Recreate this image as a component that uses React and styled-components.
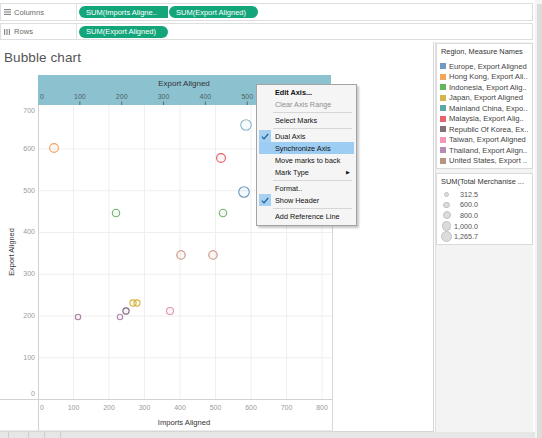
import React from 'react';
import styled, { createGlobalStyle } from 'styled-components';

const GlobalStyle = createGlobalStyle`
  html, body {
    margin: 0;
    padding: 0;
    background: #fff;
  }
  body {
    font-family: "Liberation Sans", Arial, sans-serif;
    overflow: hidden;
  }
`;

const Page = styled.div`
  position: relative;
  width: 542px;
  height: 438px;
  display: flex;
  overflow: hidden;
`;

const Main = styled.div`
  width: 535px;
  display: flex;
  flex-direction: column;
`;

const Scrollbar = styled.div`
  width: 7px;
  padding-top: 4px;
  background: #f4f4f4;
  display: flex;

  &::after {
    content: '';
    flex: 1;
    margin-left: 2px;
    background: #dcdcdc;
  }
`;

const Shelves = styled.div`
  width: 533px;
  padding-top: 3px;
  display: flex;
  flex-direction: column;
  gap: 2px;
  margin-bottom: 2px;
`;

const Shelf = styled.div`
  height: ${p => p.$h}px;
  box-sizing: border-box;
  border: 1px solid #dedede;
  display: flex;
  align-items: center;
`;

const ShelfLabel = styled.div`
  width: 76px;
  height: 100%;
  box-sizing: border-box;
  border-right: 1px solid #e2e2e2;
  display: flex;
  align-items: center;
  gap: 3px;
  padding-left: 3px;
  font-size: 7.6px;
  color: #6a6a6a;
`;

const PillRow = styled.div`
  display: flex;
  gap: 1px;
  padding-left: 2px;
`;

const Pill = styled.span`
  display: inline-flex;
  align-items: center;
  width: 89px;
  height: 12px;
  box-sizing: border-box;
  padding-left: 7px;
  background: #13a67a;
  color: #fff;
  font-size: 7.5px;
  border-radius: ${p => (p.$joined ? '6px 0 0 6px' : '6px')};
  white-space: nowrap;
  overflow: hidden;
`;

const Workspace = styled.div`
  height: 390px;
  display: flex;
`;

const Sheet = styled.section`
  width: 434px;
  height: 390px;
  box-sizing: border-box;
  border-right: 1px solid #d6d6d6;
  border-bottom: 1px solid #d6d6d6;
  display: flex;
  flex-direction: column;
`;

const Title = styled.h1`
  margin: 0;
  padding: 7px 0 0 4px;
  height: 22px;
  line-height: 18px;
  font-size: 13.5px;
  font-weight: normal;
  color: #555;
  letter-spacing: 0.1px;
`;

const ChartGrid = styled.div`
  margin-top: 7px;
  display: grid;
  grid-template-columns: 38px 295px;
  grid-template-rows: 30px 294px 32px;
`;

const TopHeader = styled.div`
  grid-column: 2;
  width: 293px;
  background: #8cc2d0;
`;

const Corner = styled.div`
  border-top: 1px solid #d2d2d2;
  border-bottom: 1px solid #ececec;
`;

const XAxisCell = styled.div`
  box-sizing: border-box;
  border-top: 1px solid #d2d2d2;
  border-left: 1px solid #d2d2d2;
  border-right: 1px solid #d8d8d8;
  border-bottom: 1px solid #ececec;
  overflow: hidden;
`;

const Legends = styled.aside`
  width: 98px;
  margin-left: 1px;
  box-sizing: border-box;
  background: #f3f3f3;
  border-left: 1px solid #e0e0e0;
  display: flex;
  flex-direction: column;
  gap: 4px;
  padding-top: 1px;
`;

const LegendCard = styled.div`
  background: #fff;
  border: 1px solid #dadada;
  padding: 3px 2px 2px 3px;
`;

const LegendTitle = styled.div`
  font-size: 7.4px;
  line-height: 10px;
  color: #333;
  padding-left: 1px;
  margin-bottom: ${p => p.$gap}px;
  white-space: nowrap;
  overflow: hidden;
`;

const LegendItem = styled.div`
  display: flex;
  align-items: center;
  gap: 3px;
  height: 10.5px;
  font-size: 7.6px;
  color: #444;
  white-space: nowrap;
`;

const Swatch = styled.span`
  width: 6px;
  height: 6px;
  flex: none;
  background: ${p => p.$c};
`;

const SizeItem = styled.div`
  display: flex;
  align-items: center;
  height: 10.6px;
  font-size: 7.2px;
  color: #555;
`;

const SizeSlot = styled.span`
  width: 13px;
  display: flex;
  justify-content: center;
`;

const SizeDot = styled.span`
  width: ${p => p.$d}px;
  height: ${p => p.$d}px;
  box-sizing: border-box;
  border-radius: 50%;
  background: #dcdcdc;
  border: 1px solid #c2c2c2;
`;

const SizeValue = styled.span`
  width: 25px;
  text-align: right;
  white-space: nowrap;
`;

const BottomBar = styled.div`
  flex: 1;
  background: #e6e6e6;
  display: flex;
`;

const Tab = styled.span`
  width: ${p => p.$w}px;
  border-right: 1px solid #cfcfcf;
`;

const Menu = styled.div`
  position: absolute;
  left: 256px;
  top: 84px;
  width: 101px;
  box-sizing: border-box;
  padding: 1px 2px 3px;
  background: #f5f5f5;
  border: 1px solid #a3a3a3;
  box-shadow: 2px 2px 2px rgba(0, 0, 0, 0.22);
`;

const MenuItem = styled.div`
  display: flex;
  align-items: center;
  height: 12px;
  font-size: 7.3px;
  font-weight: ${p => (p.$bold ? 'bold' : 'normal')};
  color: ${p => (p.$disabled ? '#8f8f8f' : '#111')};
  background: ${p => (p.$active ? '#9dcdf3' : 'transparent')};
  white-space: nowrap;
`;

const CheckSlot = styled.span`
  width: 12px;
  height: 12px;
  margin-right: 4px;
  display: flex;
  align-items: center;
  justify-content: center;
  background: ${p => (p.$on ? '#a6d1f2' : 'transparent')};
`;

const SubArrow = styled.span`
  margin-left: auto;
  margin-right: 4px;
  font-size: 5px;
`;

const MenuSep = styled.div`
  height: 1px;
  margin: 1.5px 2px 1.5px 14px;
  background: #d6d6d6;
`;

const ColumnsIcon = () => (
  <svg width="7" height="6" viewBox="0 0 7 6">
    <rect x="0" y="0" width="7" height="1.2" fill="#8a8a8a" />
    <rect x="0" y="2.4" width="7" height="1.2" fill="#8a8a8a" />
    <rect x="0" y="4.8" width="7" height="1.2" fill="#8a8a8a" />
  </svg>
);

const RowsIcon = () => (
  <svg width="7" height="6" viewBox="0 0 7 6">
    <rect x="0" y="0" width="1.2" height="6" fill="#8a8a8a" />
    <rect x="2.4" y="0" width="1.2" height="6" fill="#8a8a8a" />
    <rect x="4.8" y="0" width="1.2" height="6" fill="#8a8a8a" />
  </svg>
);

const Check = () => (
  <svg width="8" height="7" viewBox="0 0 8 7">
    <path d="M0.8 3.6 L3 5.8 L7.2 1" fill="none" stroke="#1d5f99" strokeWidth="1.2" />
  </svg>
);

const xb = v => 38 + v * 0.355;
const yv = v => 395.5 - v * 0.4175;
const xt = v => 38 + v * 0.4185;

const bubbles = [
  { x: 246, y: 121, r: 5.3, c: '#8fb9c9' },
  { x: 54, y: 144, r: 4.4, c: '#f0a462' },
  { x: 221, y: 154, r: 4.4, c: '#e25f66' },
  { x: 244, y: 188, r: 5.3, c: '#6f96bd' },
  { x: 116, y: 209, r: 3.7, c: '#73b16b' },
  { x: 223, y: 209, r: 3.7, c: '#73b16b' },
  { x: 181, y: 251, r: 4.2, c: '#c88a77' },
  { x: 213, y: 251, r: 4.2, c: '#c88a77' },
  { x: 78, y: 313, r: 2.7, c: '#ad82a7' },
  { x: 120, y: 313, r: 2.7, c: '#b68bb2' },
  { x: 126, y: 307, r: 3.1, c: '#7c6579' },
  { x: 133, y: 299, r: 3.1, c: '#d5b23f' },
  { x: 137, y: 299, r: 3.1, c: '#d5b23f' },
  { x: 170, y: 307, r: 3.5, c: '#e392b4' },
];

const yTicks = [
  { v: 700, y: 107 },
  { v: 600, y: 145 },
  { v: 500, y: 187 },
  { v: 400, y: 228 },
  { v: 300, y: 270 },
  { v: 200, y: 312 },
  { v: 100, y: 354 },
  { v: 0, y: 390 },
];

const regions = [
  ['#6f9ac4', 'Europe, Export Aligned'],
  ['#f4a65a', 'Hong Kong, Export Ali..'],
  ['#62b85f', 'Indonesia, Export Alig..'],
  ['#d7b54e', 'Japan, Export Aligned'],
  ['#5fa6a4', 'Mainland China, Expo..'],
  ['#e8646c', 'Malaysia, Export Alig..'],
  ['#837079', 'Republic Of Korea, Ex..'],
  ['#f297b6', 'Taiwan, Export Aligned'],
  ['#b58db3', 'Thailand, Export Align..'],
  ['#b6947f', 'United States, Export ..'],
];

const sizes = [
  [5, '312.5'],
  [6.5, '600.0'],
  [8, '800.0'],
  [9.5, '1,000.0'],
  [11, '1,265.7'],
];

function TopAxis() {
  const ticks = [100, 200, 300, 400, 500, 600, 700];
  return (
    <svg width="293" height="30" viewBox="38 71 293 30" style={{ display: 'block' }}>
      <text x="184" y="80" fontSize="8" fill="#333" textAnchor="middle" dominantBaseline="middle">
        Export Aligned
      </text>
      <text x="40" y="93" fontSize="7" fill="#4f5f63" dominantBaseline="middle">0</text>
      {ticks.map(v => (
        <g key={v}>
          {v < 600 && (
            <text x={xt(v)} y="93" fontSize="7" fill="#4f5f63" textAnchor="middle" dominantBaseline="middle">
              {v}
            </text>
          )}
          <line x1={xt(v)} x2={xt(v)} y1="97.5" y2="101" stroke="#4a5558" strokeWidth="0.8" />
        </g>
      ))}
    </svg>
  );
}

function YAxis() {
  return (
    <svg width="38" height="294" viewBox="0 101 38 294" style={{ display: 'block' }}>
      <text
        x="12"
        y="248"
        fontSize="7.4"
        fill="#333"
        textAnchor="middle"
        dominantBaseline="middle"
        transform="rotate(-90 12 248)"
      >
        Export Aligned
      </text>
      {yTicks.map(t => (
        <text key={t.v} x="35" y={t.y} fontSize="7" fill="#9a9a9a" textAnchor="end" dominantBaseline="middle">
          {t.v}
        </text>
      ))}
    </svg>
  );
}

function Plot() {
  const vx = [100, 200, 300, 400, 500, 600, 700, 800];
  const hy = [100, 200, 300, 400, 500, 600];
  return (
    <svg width="295" height="294" viewBox="38 101 295 294" style={{ display: 'block' }}>
      {vx.map(v => (
        <line key={v} x1={xb(v)} x2={xb(v)} y1="101" y2="395" stroke="#efefef" strokeWidth="1" />
      ))}
      {hy.map(v => (
        <line key={v} x1="38" x2="332" y1={yv(v)} y2={yv(v)} stroke="#efefef" strokeWidth="1" />
      ))}
      <line x1="38.5" x2="38.5" y1="101" y2="395" stroke="#d2d2d2" />
      <line x1="332.5" x2="332.5" y1="101" y2="395" stroke="#d8d8d8" />
      {bubbles.map((b, i) => (
        <circle
          key={i}
          cx={b.x}
          cy={b.y}
          r={b.r}
          fill={b.c}
          fillOpacity="0.07"
          stroke={b.c}
          strokeWidth="1.1"
        />
      ))}
    </svg>
  );
}

function XAxis() {
  const ticks = [100, 200, 300, 400, 500, 600, 700, 800];
  return (
    <svg width="293" height="31" viewBox="39 396 293 31" style={{ display: 'block' }}>
      <text x="40" y="404" fontSize="7" fill="#9a9a9a" dominantBaseline="middle">0</text>
      {ticks.map(v => (
        <text key={v} x={xb(v)} y="404" fontSize="7" fill="#9a9a9a" textAnchor="middle" dominantBaseline="middle">
          {v}
        </text>
      ))}
      <text x="184" y="419" fontSize="7.6" fill="#333" textAnchor="middle" dominantBaseline="middle">
        Imports Aligned
      </text>
    </svg>
  );
}

export default function App() {
  return (
    <>
      <GlobalStyle />
      <Page>
        <Main>
          <Shelves>
            <Shelf $h={18}>
              <ShelfLabel>
                <ColumnsIcon />
                Columns
              </ShelfLabel>
              <PillRow>
                <Pill $joined>SUM(Imports Aligne..</Pill>
                <Pill>SUM(Export Aligned)</Pill>
              </PillRow>
            </Shelf>
            <Shelf $h={17}>
              <ShelfLabel>
                <RowsIcon />
                Rows
              </ShelfLabel>
              <PillRow>
                <Pill>SUM(Export Aligned)</Pill>
              </PillRow>
            </Shelf>
          </Shelves>

          <Workspace>
            <Sheet>
              <Title>Bubble chart</Title>
              <ChartGrid>
                <TopHeader>
                  <TopAxis />
                </TopHeader>
                <YAxis />
                <Plot />
                <Corner />
                <XAxisCell>
                  <XAxis />
                </XAxisCell>
              </ChartGrid>
            </Sheet>

            <Legends>
              <LegendCard>
                <LegendTitle $gap={4}>Region, Measure Names</LegendTitle>
                {regions.map(([c, label]) => (
                  <LegendItem key={label}>
                    <Swatch $c={c} />
                    {label}
                  </LegendItem>
                ))}
              </LegendCard>
              <LegendCard>
                <LegendTitle $gap={2}>SUM(Total Merchanise ...</LegendTitle>
                {sizes.map(([d, v]) => (
                  <SizeItem key={v}>
                    <SizeSlot>
                      <SizeDot $d={d} />
                    </SizeSlot>
                    <SizeValue>{v}</SizeValue>
                  </SizeItem>
                ))}
              </LegendCard>
            </Legends>
          </Workspace>

          <BottomBar>
            <Tab $w={8} />
            <Tab $w={19} />
            <Tab $w={15} />
            <Tab $w={15} />
          </BottomBar>
        </Main>
        <Scrollbar />

        <Menu>
          <MenuItem $bold>
            <CheckSlot />
            Edit Axis...
          </MenuItem>
          <MenuItem $disabled>
            <CheckSlot />
            Clear Axis Range
          </MenuItem>
          <MenuSep />
          <MenuItem>
            <CheckSlot />
            Select Marks
          </MenuItem>
          <MenuSep />
          <MenuItem>
            <CheckSlot $on>
              <Check />
            </CheckSlot>
            Dual Axis
          </MenuItem>
          <MenuItem $active>
            <CheckSlot />
            Synchronize Axis
          </MenuItem>
          <MenuItem>
            <CheckSlot />
            Move marks to back
          </MenuItem>
          <MenuItem>
            <CheckSlot />
            Mark Type
            <SubArrow>▶</SubArrow>
          </MenuItem>
          <MenuSep />
          <MenuItem>
            <CheckSlot />
            Format..
          </MenuItem>
          <MenuItem>
            <CheckSlot $on>
              <Check />
            </CheckSlot>
            Show Header
          </MenuItem>
          <MenuSep />
          <MenuItem>
            <CheckSlot />
            Add Reference Line
          </MenuItem>
        </Menu>
      </Page>
    </>
  );
}
